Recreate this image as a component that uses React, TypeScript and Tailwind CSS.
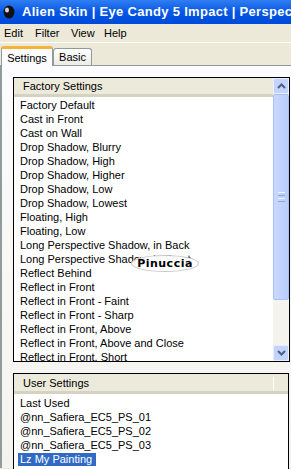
import React from "react";

const factory = [
  "Factory Default",
  "Cast in Front",
  "Cast on Wall",
  "Drop Shadow, Blurry",
  "Drop Shadow, High",
  "Drop Shadow, Higher",
  "Drop Shadow, Low",
  "Drop Shadow, Lowest",
  "Floating, High",
  "Floating, Low",
  "Long Perspective Shadow, in Back",
  "Long Perspective Shadow, in Front",
  "Reflect Behind",
  "Reflect in Front",
  "Reflect in Front - Faint",
  "Reflect in Front - Sharp",
  "Reflect in Front, Above",
  "Reflect in Front, Above and Close",
  "Reflect in Front, Short",
  "Reflect in Front, Tall",
];

const user = [
  "Last Used",
  "@nn_Safiera_EC5_PS_01",
  "@nn_Safiera_EC5_PS_02",
  "@nn_Safiera_EC5_PS_03",
  "Lz My Painting",
  "Lz Perspective Fashion 1",
];

function Arrow({ down }: { down?: boolean }) {
  return (
    <svg width="9" height="6" viewBox="0 0 9 6">
      <path
        d={down ? "M1 1 L4.5 4.5 L8 1" : "M1 5 L4.5 1.5 L8 5"}
        fill="none"
        stroke="#4d6185"
        strokeWidth="2"
      />
    </svg>
  );
}

function Scrollbar() {
  return (
    <div className="flex w-[16px] shrink-0 flex-col bg-[#f4f3ee]">
      <div className="flex h-[16px] items-center justify-center rounded-[2px] border border-[#e9eefc] bg-[#c3d3fd]">
        <Arrow />
      </div>
      <div className="flex h-[206px] flex-col items-center justify-center gap-[2px] rounded-[2px] border border-[#a9c0f7] bg-gradient-to-r from-[#c9d8fc] to-[#b9cdfb]">
        <div className="h-px w-[7px] bg-[#eef3fe]" />
        <div className="h-px w-[7px] bg-[#8ca7e8]" />
        <div className="h-px w-[7px] bg-[#eef3fe]" />
        <div className="h-px w-[7px] bg-[#8ca7e8]" />
      </div>
      <div className="flex-1" />
      <div className="flex h-[16px] items-center justify-center rounded-[2px] border border-[#e9eefc] bg-[#c3d3fd]">
        <Arrow down />
      </div>
    </div>
  );
}

function Header({ title, divider, tall }: { title: string; divider?: boolean; tall?: boolean }) {
  return (
    <div
      className={
        "relative flex shrink-0 items-center border-b-[3px] border-[#d6d2c2] bg-[#ebeadb] pl-[9px] " +
        (tall ? "h-[20px]" : "h-[19px]")
      }
    >
      {title}
      {divider ? (
        <div className="absolute right-[14px] top-[3px] h-[13px] w-px bg-white" />
      ) : null}
    </div>
  );
}

export default function App() {
  return (
    <div className="relative h-[469px] w-[291px] overflow-hidden bg-[#ece9d8] text-[11px] leading-[14px] text-black [font-family:Tahoma,'Liberation_Sans',sans-serif]">
      <div className="flex h-[24px] items-center gap-[7px] bg-gradient-to-b from-[#2f7ef2] via-[#0656e4] to-[#004ad8] pl-[3px] text-[13px] font-bold whitespace-nowrap text-white [font-family:'Liberation_Sans',sans-serif]">
        <svg width="12" height="14" viewBox="0 0 12 14" className="shrink-0">
          <ellipse cx="6" cy="7" rx="5.5" ry="6.5" fill="#111" />
          <ellipse cx="4" cy="5" rx="2" ry="2.5" fill="#d8d8d8" />
        </svg>
        <span className="tracking-[0.3px]">Alien Skin | Eye Candy 5 Impact | Perspective Shadow</span>
      </div>

      <div className="flex h-[19px] items-center border-b border-white">
        <span className="w-[35px] pl-[4px]">Edit</span>
        <span className="w-[36px]">Filter</span>
        <span className="w-[33px]">View</span>
        <span>Help</span>
      </div>

      <div className="flex h-[22px] items-end pl-[1px]">
        <div className="relative z-10 -mb-px flex h-[20px] w-[52px] items-center justify-center rounded-t-[3px] border-x border-[#919b9c] border-t-[3px] border-t-[#f5b33c] bg-[#fcfcfe]">
          Settings
        </div>
        <div className="flex h-[17px] w-[39px] items-center justify-center rounded-t-[3px] border border-b-0 border-[#919b9c] bg-gradient-to-b from-white to-[#ecebe5]">
          Basic
        </div>
      </div>

      <div className="h-[403px] border-l-2 border-t border-[#919b9c] bg-gradient-to-b from-[#fcfcfe] to-[#f4f3ee] pl-[11px] pt-[11px]">
        <div className="flex h-[285px] w-[277px] border border-black bg-white">
          <div className="flex min-w-0 flex-1 flex-col overflow-hidden">
            <Header title="Factory Settings" />
            <div className="pl-[6px] pt-px">
              {factory.map((f) => (
                <div key={f} className="h-[14px] whitespace-nowrap">
                  {f}
                </div>
              ))}
            </div>
          </div>
          <Scrollbar />
        </div>

        <div className="mt-[11px] flex h-[120px] w-[276px] flex-col overflow-hidden border border-black bg-white">
          <Header title="User Settings" divider tall />
          <div className="pl-[4px] pt-[2px]">
            {user.map((u, i) => (
              <div key={u} className="h-[14px] whitespace-nowrap">
                <span
                  className={
                    i === 4
                      ? "inline-block h-[13px] bg-[#316ac5] px-[2px] pr-[4px] leading-[13px] text-white"
                      : "inline-block px-[2px]"
                  }
                >
                  {u}
                </span>
              </div>
            ))}
          </div>
        </div>
      </div>

      <div className="absolute left-[131px] top-[255px] flex h-[17px] w-[68px] items-center justify-center rounded-[50%] border border-[#c8c8c8] bg-white/95 text-[11px] font-bold tracking-[0.5px] [font-family:'DejaVu_Sans',sans-serif]">
        Pinuccia
      </div>
    </div>
  );
}
